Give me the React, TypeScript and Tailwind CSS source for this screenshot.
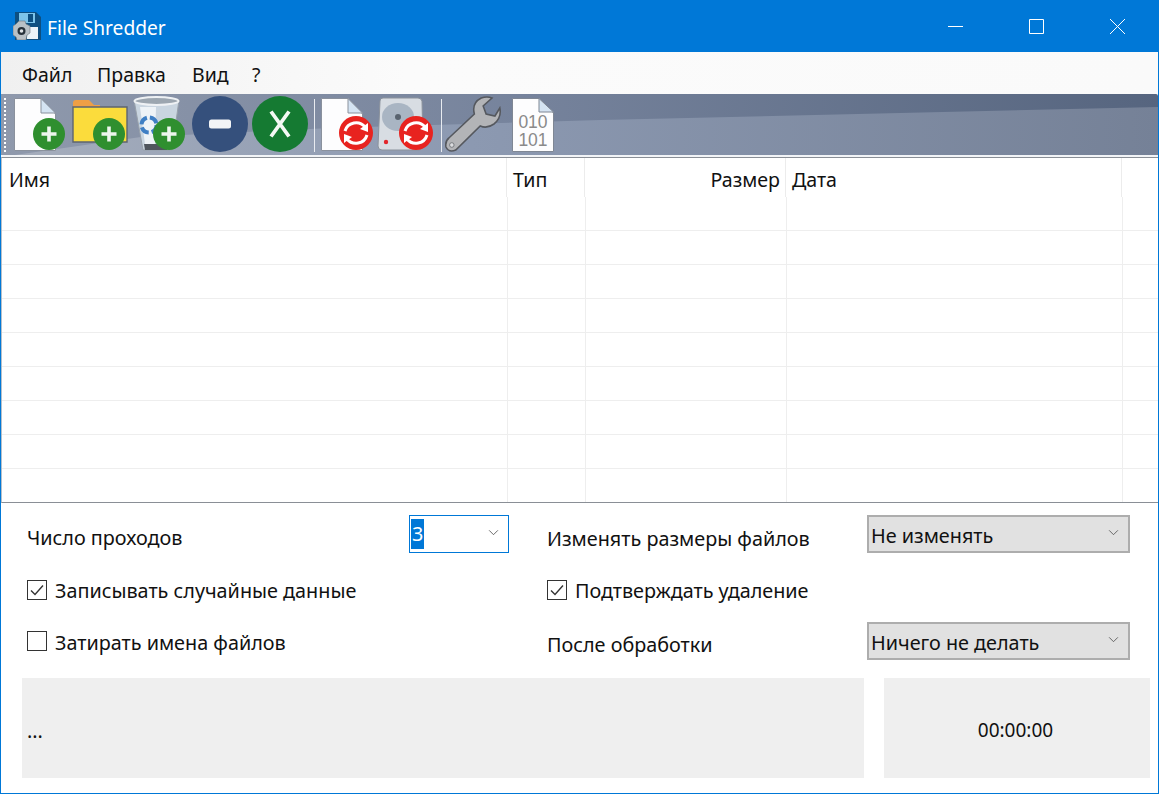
const columns = [
  { name: "Имя", head: "w-[505px] pl-[7px] text-left", cell: "w-[506px]" },
  { name: "Тип", head: "w-[78px] pl-[6px] text-left", cell: "w-[78px]" },
  { name: "Размер", head: "w-[201px] pr-[5px] text-right", cell: "w-[201px]" },
  { name: "Дата", head: "w-[336px] pl-[6px] text-left", cell: "w-[336px]" },
  { name: "", head: "flex-1", cell: "flex-1" },
];

function Chevron({ className }: { className: string }) {
  return (
    <svg viewBox="0 0 12 8" className={className} fill="none" stroke="#555" strokeWidth="1">
      <path d="M1 1.5 6 6.5 11 1.5" />
    </svg>
  );
}

function Check({ checked }: { checked?: boolean }) {
  return (
    <span className="flex h-[20px] w-[20px] shrink-0 items-center justify-center border-[1.5px] border-[#333] bg-white">
      {checked && (
        <svg viewBox="0 0 16 16" className="h-[16px] w-[16px]" fill="none" stroke="#333" strokeWidth="1.4">
          <path d="M2 8.5 6 12.5 14 3.5" />
        </svg>
      )}
    </span>
  );
}

function Plus({ cx, cy }: { cx: number; cy: number }) {
  return (
    <g>
      <circle cx={cx} cy={cy} r="16" fill="#2f8f2f" />
      <path d={`M${cx - 7.5} ${cy}H${cx + 7.5}M${cx} ${cy - 7.5}V${cy + 7.5}`} stroke="#eef6ee" strokeWidth="3.6" />
    </g>
  );
}

function Sync({ cx, cy }: { cx: number; cy: number }) {
  return (
    <g>
      <circle cx={cx} cy={cy} r="17" fill="#e8231f" />
      <path
        d={`M${cx - 11} ${cy - 2}A11.5 11.5 0 0 1 ${cx + 9} ${cy - 6}`}
        fill="none"
        stroke="#fff"
        strokeWidth="3"
      />
      <path d={`M${cx + 4} ${cy - 4}L${cx + 12} ${cy - 1}L${cx + 12} ${cy - 10}Z`} fill="#fff" />
      <path
        d={`M${cx + 11} ${cy + 2}A11.5 11.5 0 0 1 ${cx - 9} ${cy + 6}`}
        fill="none"
        stroke="#fff"
        strokeWidth="3"
      />
      <path d={`M${cx - 4} ${cy + 4}L${cx - 12} ${cy + 1}L${cx - 12} ${cy + 10}Z`} fill="#fff" />
    </g>
  );
}

function Sheet() {
  return (
    <g>
      <path d="M4.5 4.5H31L45.5 20V56.5H4.5Z" fill="#fdfdfe" stroke="#8a919d" strokeWidth="1" />
      <path d="M31 4.5V19H45.5Z" fill="#d5e4f3" stroke="#8a919d" strokeWidth="1" />
    </g>
  );
}

function Tool({ children }: { children: React.ReactNode }) {
  return (
    <svg viewBox="0 0 60 60" className="h-[60px] w-[60px] shrink-0">
      {children}
    </svg>
  );
}

function Separator() {
  return <div className="mt-[5px] mr-[2px] ml-[4px] h-[53px] w-px shrink-0 bg-[#e8ebf0]" />;
}

function AppIcon() {
  return (
    <svg viewBox="0 0 28 28" className="h-[28px] w-[28px] shrink-0">
      <path d="M2 0H23L28 5V28H2Z" fill="#0d4f80" />
      <path d="M6 1H22V11H6Z" fill="#7cc4ea" />
      <path d="M15 2H20V10H15Z" fill="#0d4f80" />
      <path d="M14 15H25V27H14Z" fill="#eaf3f8" />
      <path
        d="M6 9H12L13 12L17 14V21L14 23L13 28H4L3 25L0 23V14L3 12Z"
        fill="#b9c1c6"
        stroke="#6b7378"
        strokeWidth="0.6"
      />
      <circle cx="8.5" cy="19" r="4" fill="#27323a" />
      <circle cx="8.5" cy="19" r="1.8" fill="#dfe4e7" />
    </svg>
  );
}

function Toolbar() {
  return (
    <div className="relative flex h-[63px] shrink-0 overflow-hidden rounded-tr-[2px] border-b-2 border-[#f2f4f7] pl-[9px]">
      <svg
        viewBox="0 0 1157 63"
        preserveAspectRatio="none"
        className="absolute inset-0 h-[63px] w-full"
      >
        <defs>
          <linearGradient id="tb-top" x1="0" x2="1" y1="0" y2="0">
            <stop offset="0" stopColor="#8f99ac" />
            <stop offset="0.45" stopColor="#76839c" />
            <stop offset="1" stopColor="#56657f" />
          </linearGradient>
          <linearGradient id="tb-low" x1="0" x2="1" y1="0" y2="0">
            <stop offset="0" stopColor="#a5adbc" />
            <stop offset="0.4" stopColor="#8c99b1" />
            <stop offset="1" stopColor="#758197" />
          </linearGradient>
        </defs>
        <rect width="1157" height="63" fill="url(#tb-top)" />
        <path d="M14 61 140 43 330 34 600 26 1157 13V63H14Z" fill="url(#tb-low)" />
      </svg>
      <div className="absolute top-[4px] left-[3px] h-[54px] border-l-2 border-dotted border-white" />

      <div className="relative flex items-start">
        <Tool>
          <Sheet />
          <Plus cx={39} cy={40} />
        </Tool>
        <Tool>
          <path d="M3 16V9Q3 6 6 6H19L24 11H30V16Z" fill="#ef9f45" />
          <path d="M3 13H57V48H3Z" fill="#fbdc3c" stroke="#5d6470" strokeWidth="1.4" />
          <Plus cx={39} cy={40} />
        </Tool>
        <Tool>
          <path d="M4 6H49L42 56H13Z" fill="#c9d5e0" stroke="#98a1ab" strokeWidth="1" />
          <path d="M10 13H26L25 50H15Z" fill="#eef3f7" />
          <ellipse cx="26.5" cy="7" rx="22" ry="4" fill="#9ca6b0" stroke="#eef1f4" strokeWidth="2" />
          <circle cx="19" cy="31" r="7.5" fill="none" stroke="#3f7fc4" strokeWidth="4" strokeDasharray="9 3" />
          <path d="M14 50H38L37 56H15Z" fill="#50565e" />
          <Plus cx={39} cy={40} />
        </Tool>
        <Tool>
          <circle cx="30" cy="30" r="28" fill="#35507c" />
          <rect x="19" y="25.5" width="22" height="9" rx="2.5" fill="#f3f4f6" />
        </Tool>
        <Tool>
          <circle cx="30" cy="30" r="28" fill="#157a32" />
          <path d="M21 17.5 39 42.5M39 17.5 21 42.5" stroke="#f4f8f4" strokeWidth="3.8" />
        </Tool>
        <Separator />
        <Tool>
          <Sheet />
          <Sync cx={39} cy={39} />
        </Tool>
        <Tool>
          <path
            d="M6 4H41Q44 4 45 7L46 52Q46 56 42 56H5Q1 56 1 52L3 7Q3 4 6 4Z"
            fill="#d8dde3"
            stroke="#8b929c"
            strokeWidth="1"
          />
          <ellipse cx="21" cy="23" rx="16" ry="14" fill="#a9b5c3" />
          <circle cx="21" cy="23" r="3" fill="#59636f" />
          <circle cx="9" cy="48" r="2.2" fill="#e2262b" />
          <Sync cx={39} cy={39} />
        </Tool>
        <Separator />
        <Tool>
          <g transform="translate(-1 0) scale(0.98 1)">
            <path
              d="M3 53Q2 47 6 44L32 20Q29 9 39 4Q45 2 50 4L41 12L44 20L53 22L58 14Q60 24 52 30Q45 35 38 32L13 56Q6 59 3 53Z"
              fill="#b3b4b7"
              stroke="#55585e"
              strokeWidth="1.6"
            />
            <circle cx="9" cy="51" r="2.3" fill="#dcdde0" stroke="#66696e" strokeWidth="0.8" />
          </g>
        </Tool>
        <Tool>
          <path d="M8.5 4.5H35L49.5 19V57.5H8.5Z" fill="#fdfdfe" stroke="#7f8794" strokeWidth="1" />
          <path d="M35 4.5V18H49.5Z" fill="#d5e4f3" stroke="#7f8794" strokeWidth="1" />
          <text x="29" y="34" textAnchor="middle" fontFamily="Liberation Sans" fontSize="17.5" fill="#8a8a8a">
            010
          </text>
          <text x="29" y="52" textAnchor="middle" fontFamily="Liberation Sans" fontSize="17.5" fill="#8a8a8a">
            101
          </text>
        </Tool>
      </div>
    </div>
  );
}

export default function App() {
  return (
    <div className="flex h-[794px] w-[1159px] flex-col overflow-hidden border-x border-b border-[#0078d7] bg-white font-['Noto_Sans','Open_Sans',sans-serif] text-[19.8px] leading-none text-[#111]">
      <div className="flex h-[52px] shrink-0 items-center bg-[#0078d7] pl-[12px] text-white">
        <AppIcon />
        <span className="mt-[4px] ml-[6px] text-[19.2px]">File Shredder</span>
        <div className="ml-auto flex">
          <div className="flex h-[30px] w-[81px] items-center justify-center">
            <svg viewBox="0 0 15 15" className="h-[15px] w-[15px]" stroke="#fff" strokeWidth="1">
              <path d="M0 7.5H15" />
            </svg>
          </div>
          <div className="flex h-[30px] w-[81px] items-center justify-center">
            <svg viewBox="0 0 15 15" className="h-[15px] w-[15px]" fill="none" stroke="#fff" strokeWidth="1">
              <path d="M.5.5H14.5V14.5H.5Z" />
            </svg>
          </div>
          <div className="flex h-[30px] w-[81px] items-center justify-center">
            <svg viewBox="0 0 15 15" className="h-[15px] w-[15px]" stroke="#fff" strokeWidth="1">
              <path d="M0 0 15 15M15 0 0 15" />
            </svg>
          </div>
        </div>
      </div>

      <div className="flex h-[42px] shrink-0 items-center bg-[linear-gradient(90deg,#f0f0f0,#fbfbfb_35%,#fafafa)] pt-[4px] pl-[21px] text-[19.5px]">
        <span className="w-[75px]">Файл</span>
        <span className="w-[95px]">Правка</span>
        <span className="w-[60px]">Вид</span>
        <span>?</span>
      </div>

      <Toolbar />

      <div className="h-[346px] shrink-0 overflow-hidden border-y border-l border-[#8a8f96] border-l-[#b8c0c8] text-[19.6px]">
        <div className="flex h-[39px]">
          {columns.map((c) => (
            <div key={c.name} className={`${c.head} border-r border-[#ececec] pt-[12px] last:border-r-0`}>
              {c.name}
            </div>
          ))}
        </div>
        {Array.from({ length: 9 }, (_, i) => (
          <div key={i} className="flex h-[34px] border-b border-[#eeeeee]">
            {columns.map((c) => (
              <div key={c.name} className={`${c.cell} border-r border-[#eeeeee] last:border-r-0`} />
            ))}
          </div>
        ))}
      </div>

      <div className="mt-[12px] ml-[26px] grid grid-cols-[482px_358px_263px] grid-rows-[38px_69px_38px]">
        <div className="flex items-center justify-between">
          <span className="mt-[7px]">Число проходов</span>
          <div className="flex h-[38px] w-[100px] items-center border-[1.5px] border-[#0078d7] pl-[1px]">
            <span className="flex h-[30px] items-center bg-[#0078d7] px-[1px] text-white">3</span>
            <Chevron className="mr-[9px] mb-[3px] ml-auto h-[7px] w-[11px]" />
          </div>
        </div>
        <div className="ml-[38px] flex items-center">
          <span className="mt-[9px]">Изменять размеры файлов</span>
        </div>
        <div className="flex h-[38px] items-center justify-between border-2 border-[#adadad] bg-[#e1e1e1] pl-[2px]">
          <span className="mt-[3px]">Не изменять</span>
          <Chevron className="mr-[9px] mb-[4px] h-[7px] w-[11px]" />
        </div>

        <div className="flex items-center gap-[8px] pt-[5px]">
          <Check checked />
          <span className="mt-[2px]">Записывать случайные данные</span>
        </div>
        <div className="col-span-2 ml-[38px] flex items-center gap-[8px] pt-[5px]">
          <Check checked />
          <span className="mt-[2px]">Подтверждать удаление</span>
        </div>

        <div className="flex items-center gap-[8px]">
          <Check />
          <span className="mt-[4px]">Затирать имена файлов</span>
        </div>
        <div className="ml-[38px] flex items-center">
          <span className="mt-[7px]">После обработки</span>
        </div>
        <div className="flex h-[38px] items-center justify-between border-2 border-[#adadad] bg-[#e1e1e1] pl-[2px]">
          <span className="mt-[3px]">Ничего не делать</span>
          <Chevron className="mr-[9px] mb-[4px] h-[7px] w-[11px]" />
        </div>
      </div>

      <div className="mt-[18px] ml-[21px] flex gap-[20px]">
        <div className="flex h-[100px] w-[842px] items-center bg-[#efefef] pt-[6px] pl-[5px]">...</div>
        <div className="flex h-[100px] w-[266px] items-center justify-center bg-[#efefef] pt-[4px] pr-[3px] text-[19px]">
          00:00:00
        </div>
      </div>
    </div>
  );
}
